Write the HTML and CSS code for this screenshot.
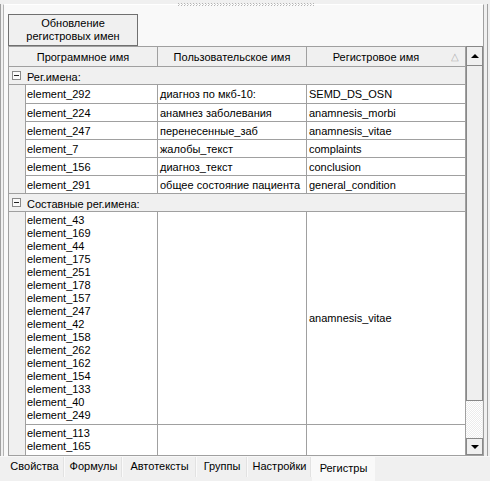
FILE: index.html
```html
<!DOCTYPE html>
<html lang="ru">
<head>
<meta charset="utf-8">
<title>Регистры</title>
<link rel="stylesheet" href="styles.css">
</head>
<body>
<div class="window">
  <div class="topstrip">
    <svg class="grip" width="136" height="3" viewBox="0 0 136 3">
      <defs>
        <pattern id="dots" width="3" height="2" patternUnits="userSpaceOnUse">
          <rect x="0" y="0" width="1" height="1" fill="#b4b4b4"/>
          <rect x="1" y="1" width="1" height="1" fill="#d0d0d0"/>
        </pattern>
      </defs>
      <rect width="136" height="3" fill="url(#dots)"/>
    </svg>
  </div>
  <div class="frame">
    <div class="panel">
      <div class="toolbar">
        <div class="btn">Обновление<br>регистровых имен</div>
      </div>
      <div class="grid">
        <div class="grid-main">
          <div class="header">
            <div class="hcell c1">Программное имя</div>
            <div class="hcell c2">Пользовательское имя</div>
            <div class="hcell c3"><span class="htext">Регистровое имя</span><span class="sort">△</span></div>
          </div>
          <div class="body">
            <div class="group first">
              <div class="ghead"><span class="minus"></span><span class="gtitle">Рег.имена:</span></div>
              <div class="row"><div class="indent"></div><div class="cell d1">element_292</div><div class="cell d2">диагноз по мкб-10:</div><div class="cell d3">SEMD_DS_OSN</div></div>
              <div class="row"><div class="indent"></div><div class="cell d1">element_224</div><div class="cell d2">анамнез заболевания</div><div class="cell d3">anamnesis_morbi</div></div>
              <div class="row"><div class="indent"></div><div class="cell d1">element_247</div><div class="cell d2">перенесенные_заб</div><div class="cell d3">anamnesis_vitae</div></div>
              <div class="row"><div class="indent"></div><div class="cell d1">element_7</div><div class="cell d2">жалобы_текст</div><div class="cell d3">complaints</div></div>
              <div class="row"><div class="indent"></div><div class="cell d1">element_156</div><div class="cell d2">диагноз_текст</div><div class="cell d3">conclusion</div></div>
              <div class="row"><div class="indent"></div><div class="cell d1">element_291</div><div class="cell d2">общее состояние пациента</div><div class="cell d3">general_condition</div></div>
            </div>
            <div class="group">
              <div class="ghead"><span class="minus"></span><span class="gtitle">Составные рег.имена:</span></div>
              <div class="row tall"><div class="indent"></div>
                <div class="cell d1 list">element_43<br>element_169<br>element_44<br>element_175<br>element_251<br>element_178<br>element_157<br>element_247<br>element_42<br>element_158<br>element_262<br>element_162<br>element_154<br>element_133<br>element_40<br>element_249</div>
                <div class="cell d2"></div>
                <div class="cell d3 mid">anamnesis_vitae</div>
              </div>
              <div class="row tall"><div class="indent"></div>
                <div class="cell d1 list">element_113<br>element_165<br>element_166</div>
                <div class="cell d2"></div>
                <div class="cell d3"></div>
              </div>
            </div>
          </div>
        </div>
        <div class="vscroll">
          <div class="sbtn up"><span class="tri-up"></span></div>
          <div class="thumb"></div>
          <div class="track"></div>
          <div class="sbtn down"><span class="tri-down"></span></div>
        </div>
      </div>
    </div>
  </div>
  <div class="tabs">
    <div class="tab t1">Свойства</div>
    <div class="tab t2">Формулы</div>
    <div class="tab t3">Автотексты</div>
    <div class="tab t4">Группы</div>
    <div class="tab t5">Настройки</div>
    <div class="tab active">Регистры</div>
  </div>
</div>
</body>
</html>
```
FILE: styles.css
```css
* { box-sizing: border-box; }
html, body { margin: 0; padding: 0; }
body {
  width: 490px;
  height: 481px;
  overflow: hidden;
  background: #f0f0f0;
  font-family: "Liberation Sans", Arial, sans-serif;
  font-size: 11px;
  color: #000;
}
.window { width: 490px; height: 481px; display: flex; flex-direction: column; }

.topstrip { height: 4px; position: relative; flex: none; }
.grip { position: absolute; left: 178px; top: 3px; display: block; }

.frame {
  flex: none;
  width: 488px;
  height: 452px;
  border-left: 1px solid #a0a0a0;
  border-right: 1px solid #a0a0a0;
  padding: 0 3px 0 2px;
}
.panel {
  height: 100%;
  background: #f9f9f9;
  border-left: 1px solid #b4b4b4;
  border-right: 1px solid #a0a0a0;
  border-top: 1px solid #ffffff;
  padding: 9px 0 0 4px;
  display: flex;
  flex-direction: column;
}
.toolbar { height: 32px; flex: none; display: flex; }
.btn {
  width: 130px;
  height: 32px;
  border: 1px solid #707070;
  background: #f0f0f0;
  text-align: center;
  line-height: 13px;
  padding-top: 2px;
}

.grid {
  flex: none;
  width: 475px;
  height: 410px;
  display: flex;
  border-bottom: 1px solid #a0a0a0;
}
.grid-main {
  width: 458px;
  border-left: 1px solid #a0a0a0;
  border-top: 1px solid #a0a0a0;
  display: flex;
  flex-direction: column;
  background: #f0f0f0;
}
.header { display: flex; height: 20px; flex: none; border-bottom: 1px solid #a0a0a0; background: #f0f0f0; }
.hcell {
  height: 19px;
  border-right: 1px solid #a0a0a0;
  display: flex;
  align-items: center;
  justify-content: center;
}
.c1 { width: 149px; }
.c2 { width: 149px; }
.c3 { width: 159px; justify-content: flex-start; }
.htext { width: 138px; text-align: center; }
.sort { color: #b0b0b0; font-size: 10px; margin-left: 6px; }

.body { flex: 1; overflow: hidden; }
.group { display: flex; flex-direction: column; }
.ghead {
  height: 18px;
  width: 457px;
  display: flex;
  align-items: center;
  background: #f0f0f0;
  border-bottom: 1px solid #a0a0a0;
  border-right: 1px solid #a0a0a0;
}
.group + .group .ghead { height: 19px; border-top: 1px solid #a0a0a0; }
.minus {
  width: 9px; height: 9px;
  margin-left: 3px;
  border: 1px solid #8a8a8a;
  background: #fafafa;
  position: relative;
  flex: none;
}
.minus::after {
  content: "";
  position: absolute;
  left: 1px; top: 3px;
  width: 5px; height: 1px;
  background: #222;
}
.gtitle { margin-left: 6px; padding-top: 2px; }

.row { display: flex; height: 18px; }
.row + .row .cell { border-top: 1px solid #a0a0a0; }
.row:first-of-type { height: 17px; }
.indent { width: 16px; flex: none; background: #f0f0f0; }
.cell {
  background: #fff;
  border-right: 1px solid #a0a0a0;
  padding-left: 2px;
  display: flex;
  align-items: center;
  white-space: nowrap;
  overflow: hidden;
}
.d1 { width: 133px; border-left: 1px solid #a0a0a0; padding-left: 1px; }
.d2 { width: 149px; }
.d3 { width: 159px; }
.row.tall { height: auto; }
.row.tall:first-of-type { height: 212px; }
.list { display: block; line-height: 13px; padding-top: 2px; padding-bottom: 2px; }
.row.tall + .row.tall { height: 44px; }

.vscroll { width: 17px; display: flex; flex-direction: column; background: #f0f0f0; }
.sbtn {
  border: 1px solid #888;
  background: #f0f0f0;
  display: flex;
  align-items: center;
  justify-content: center;
  flex: none;
}
.up { height: 20px; }
.down { height: 17px; }
.thumb { height: 335px; border: 1px solid #888; border-top: none; background: #efefef; flex: none; }
.track {
  flex: 1;
  background: repeating-conic-gradient(#ffffff 0 25%, #ececec 0 50%) 0 0 / 2px 2px;
  border-right: 1px solid #f0f0f0;
}
.tri-up { width: 0; height: 0; border-left: 4px solid transparent; border-right: 4px solid transparent; border-bottom: 4px solid #000; }
.tri-down { width: 0; height: 0; border-left: 4px solid transparent; border-right: 4px solid transparent; border-top: 4px solid #000; }

.tabs {
  flex: none;
  height: 25px;
  display: flex;
  align-items: flex-start;
  padding-left: 5px;
  border-top: 1px solid #f8f8f8;
  background: #f0f0f0;
}
.tab {
  height: 20px;
  padding-top: 3px;
  line-height: 13px;
  text-align: center;
  white-space: nowrap;
  border-right: 1px solid #fafafa;
  box-shadow: inset -1px 0 0 #e2e2e2;
}
.t1 { width: 60px; }
.t2 { width: 58px; }
.t3 { width: 74px; }
.t4 { width: 51px; }
.t5 { width: 64px; }
.tab.active {
  width: 63px;
  height: 24px;
  background: #f9f9f9;
  padding-top: 5px;
  border: none;
  box-shadow: none;
}
```
